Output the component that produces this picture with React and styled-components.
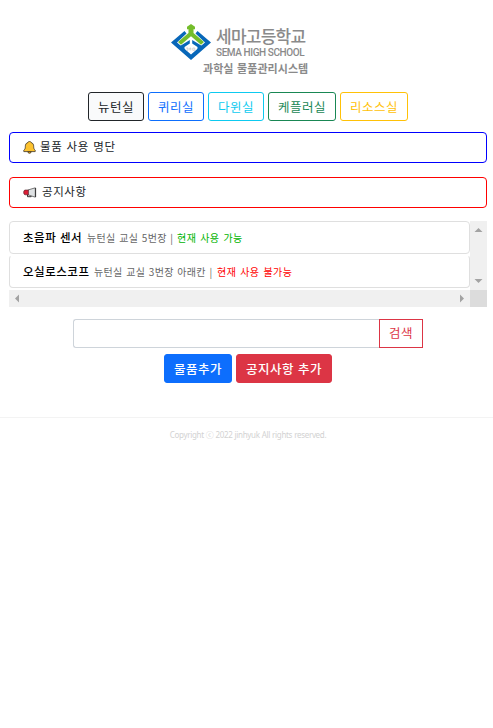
import React from "react";
import styled, { createGlobalStyle } from "styled-components";

const GlobalStyle = createGlobalStyle`
  *, *::before, *::after { box-sizing: border-box; }
  html, body { margin: 0; background: #fff; }
  body {
    font-family: "Noto Sans CJK KR", sans-serif;
    font-size: 13px;
    color: #212529;
    overflow: hidden;
  }
`;

const Page = styled.main`
  display: flex;
  flex-direction: column;
  width: 493px;
  height: 728px;
  padding: 18px 6px 0 9px;
`;

const Header = styled.header`
  display: flex;
  flex-direction: column;
  height: 74px;
  padding: 6px 0 0 161px;
`;

const Brand = styled.div`
  display: flex;
  height: 37px;
`;

const Emblem = styled.svg`
  display: block;
  width: 42px;
  height: 37px;
  flex: none;
`;

const SchoolName = styled.div`
  display: flex;
  flex-direction: column;
  padding-left: 4px;
  color: #8a8a8a;
  white-space: nowrap;
`;

const KoreanName = styled.span`
  font-size: 17px;
  font-weight: 500;
  line-height: 23px;
  height: 23px;
  letter-spacing: -0.75px;
`;

const EnglishName = styled.span`
  font-family: Roboto, sans-serif;
  font-weight: 500;
  font-size: 10px;
  line-height: 11px;
  letter-spacing: -0.42px;
`;

const SystemName = styled.div`
  padding-left: 33px;
  color: #8a8a8a;
  font-size: 11px;
  font-weight: 700;
  line-height: 14px;
  letter-spacing: 0.05px;
  word-spacing: 1px;
  white-space: nowrap;
`;

const ButtonRow = styled.div`
  display: flex;
  justify-content: center;
  gap: 4px;
  height: 29px;
  margin-top: ${(p) => p.$top || 0}px;
`;

const Button = styled.button`
  height: 29px;
  width: ${(p) => p.$width}px;
  padding: 0 0 ${(p) => (p.$square ? 1 : 0)}px;
  border: 1px solid ${(p) => p.$color};
  border-radius: ${(p) => (p.$square ? 0 : 3)}px;
  background: ${(p) => p.$fill || "#fff"};
  color: ${(p) => p.$text || p.$color};
  font: ${(p) => (p.$fill && p.$text ? 500 : 400)} 12.5px/26px "Noto Sans CJK KR", sans-serif;
  letter-spacing: 0.5px;
  word-spacing: 0.8px;
  white-space: nowrap;
`;

const Notice = styled.section`
  display: flex;
  align-items: center;
  height: 31px;
  margin-top: ${(p) => p.$top}px;
  padding: 0 0 3px 13px;
  border: 1px solid ${(p) => p.$color};
  border-radius: 4px;
  font-size: 11.5px;
  letter-spacing: ${(p) => p.$tracking}px;
  word-spacing: 0.9px;
`;

const NoticeIcon = styled.svg`
  width: ${(p) => p.$width}px;
  height: 13px;
  margin: 2px ${(p) => p.$gap}px 0 0;
  flex: none;
`;

const ScrollArea = styled.section`
  display: grid;
  grid-template-columns: 461px 17px;
  grid-template-rows: 69px 17px;
  margin-top: 13px;
`;

const List = styled.div`
  display: flex;
  flex-direction: column;
  gap: 1px;
  overflow: hidden;
`;

const Item = styled.div`
  display: flex;
  align-items: baseline;
  height: 33px;
  padding: 7px 0 0 13px;
  border: 1px solid #dfdfdf;
  border-top-color: ${(p) => (p.$continued ? "transparent" : "#dfdfdf")};
  border-radius: 4px;
  line-height: 17px;
  white-space: nowrap;
`;

const ItemName = styled.strong`
  width: ${(p) => p.$width}px;
  font-size: 11.5px;
  font-weight: 500;
  color: #000;
  letter-spacing: 0.5px;
  word-spacing: 0.7px;
`;

const Place = styled.span`
  width: ${(p) => p.$width}px;
  color: #666;
  font-size: 10px;
  letter-spacing: 0.3px;
  word-spacing: 1.1px;
`;

const Status = styled.span`
  color: ${(p) => p.$color};
  font-size: 10px;
  letter-spacing: 0.45px;
  word-spacing: 1.2px;
`;

const ScrollBar = styled.div`
  display: flex;
  flex-direction: ${(p) => (p.$vertical ? "column" : "row")};
  justify-content: space-between;
  background: #f0f0f0;
`;

const Arrow = styled.svg`
  display: block;
  width: 17px;
  height: 17px;
  fill: #a3a3a3;
`;

const Corner = styled.div`
  background: #dcdcdc;
`;

const Search = styled.div`
  display: flex;
  margin: 12px 0 0 64px;
`;

const SearchInput = styled.input`
  width: 306px;
  height: 29px;
  padding: 0 8px;
  border: 1px solid #ced4da;
  border-right: 0;
  border-radius: 3px 0 0 3px;
  outline: 0;
`;

const Footer = styled.footer`
  margin: 34px -6px 0 -9px;
  padding: 11px 0 0 3px;
  border-top: 1px solid #f3f3f3;
  color: #d2d2d2;
  font-family: "Noto Sans", "Noto Sans CJK KR", sans-serif;
  font-size: 8px;
  line-height: 11px;
  letter-spacing: -0.32px;
  word-spacing: 0.3px;
  text-align: center;
`;

const rooms = [
  { name: "뉴턴실", color: "#212529", width: 56, fill: "#f9fafb" },
  { name: "퀴리실", color: "#0d6efd", width: 56 },
  { name: "다윈실", color: "#0dcaf0", width: 56 },
  { name: "케플러실", color: "#198754", width: 68 },
  { name: "리소스실", color: "#ffc107", width: 68 },
];

function SchoolEmblem() {
  return (
    <Emblem viewBox="0 0 42 37">
      <path d="M14.5 7 1 18.5 21 36 41 18.5 27.5 7 25.5 9.5 35 18.5 29 23.5 21 30.5 13 23.5 7 18.5 16.5 9.5Z" fill="#0867b9" />
      <path d="M10 22 19.8 16v3.5L14.5 23v3.5h-2ZM32 22 22.2 16v3.5L27.5 23v3.5h2Z" fill="#0867b9" />
      <path d="M17 2.8 21 0l4 2.8v2.4h-1.5V9L34 18l-3 2.7L21 12.2 11 20.7 8 18 18.5 9V5.2H17Z" fill="#74bd2b" />
      <path d="M16.2 24h1.8v2.3h-1.8m3.6 0V24h1v2.3m2-2.3h2v2.3h-2Z" fill="none" stroke="#bbb" strokeWidth=".6" />
    </Emblem>
  );
}

function Bell() {
  return (
    <NoticeIcon viewBox="0 0 13 13" $width={13} $gap={4}>
      <path d="M4.8 10.4a1.7 1.9 0 0 0 3.4 0Z" fill="#e8a318" stroke="#3d3425" strokeWidth=".8" />
      <path d="M5 1.5c0-1.4 3-1.4 3 0C10 2 10.7 3.6 10.7 5.7c0 1.6.3 2.6 1.5 3.5v1.4H.8V9.2c1.2-.9 1.5-1.9 1.5-3.5 0-2.1.7-3.7 2.7-4.2Z" fill="#fcc22f" stroke="#3d3425" strokeWidth=".8" />
    </NoticeIcon>
  );
}

function Megaphone() {
  return (
    <NoticeIcon viewBox="0 0 14 13" $width={14} $gap={5}>
      <path d="M4.5 8.5v2.2h3.7V9.5" fill="none" stroke="#333" strokeWidth="1" />
      <path d="M4.8 4 12.3 1.8v9.4L4.8 8.8Z" fill="#dfe2e4" stroke="#444" strokeWidth=".7" />
      <path d="M5.4 4H2C.2 4 .2 8.8 2 8.8h3.4Z" fill="#dc1d36" stroke="#4d2027" strokeWidth=".6" />
      <path d="M12.6 2v9" stroke="#333" strokeWidth="1" />
    </NoticeIcon>
  );
}

export default function App() {
  return (
    <>
      <GlobalStyle />
      <Page>
        <Header>
          <Brand>
            <SchoolEmblem />
            <SchoolName>
              <KoreanName>세마고등학교</KoreanName>
              <EnglishName>SEMA HIGH SCHOOL</EnglishName>
            </SchoolName>
          </Brand>
          <SystemName>과학실 물품관리시스템</SystemName>
        </Header>
        <ButtonRow>
          {rooms.map((r) => (
            <Button key={r.name} $color={r.color} $width={r.width} $fill={r.fill}>{r.name}</Button>
          ))}
        </ButtonRow>
        <Notice $color="#0000ff" $top={11} $tracking={0.65}><Bell />물품 사용 명단</Notice>
        <Notice $color="#ff0000" $top={14} $tracking={0.6}><Megaphone />공지사항</Notice>
        <ScrollArea>
          <List>
            <Item>
              <ItemName $width={64}>초음파 센서</ItemName>
              <Place $width={90}>뉴턴실 교실 5번장 |</Place>
              <Status $color="#00b400">현재 사용 가능</Status>
            </Item>
            <Item $continued>
              <ItemName $width={71}>오실로스코프</ItemName>
              <Place $width={123}>뉴턴실 교실 3번장 아래칸 |</Place>
              <Status $color="#ff0000">현재 사용 불가능</Status>
            </Item>
          </List>
          <ScrollBar $vertical>
            <Arrow viewBox="0 0 17 17"><path d="M4.5 11 8.5 7l4 4Z" /></Arrow>
            <Arrow viewBox="0 0 17 17"><path d="M4.5 6h8l-4 4Z" /></Arrow>
          </ScrollBar>
          <ScrollBar>
            <Arrow viewBox="0 0 17 17"><path d="M10 4.5v8l-4-4Z" /></Arrow>
            <Arrow viewBox="0 0 17 17"><path d="M7 4.5v8l4-4Z" /></Arrow>
          </ScrollBar>
          <Corner />
        </ScrollArea>
        <Search>
          <SearchInput aria-label="검색" />
          <Button $color="#dc3545" $width={44} $square>검색</Button>
        </Search>
        <ButtonRow $top={6}>
          <Button $color="#0d6efd" $fill="#0d6efd" $text="#fff" $width={68}>물품추가</Button>
          <Button $color="#dc3545" $fill="#dc3545" $text="#fff" $width={96}>공지사항 추가</Button>
        </ButtonRow>
        <Footer>Copyright ⓒ 2022 jinhyuk All rights reserved.</Footer>
      </Page>
    </>
  );
}
